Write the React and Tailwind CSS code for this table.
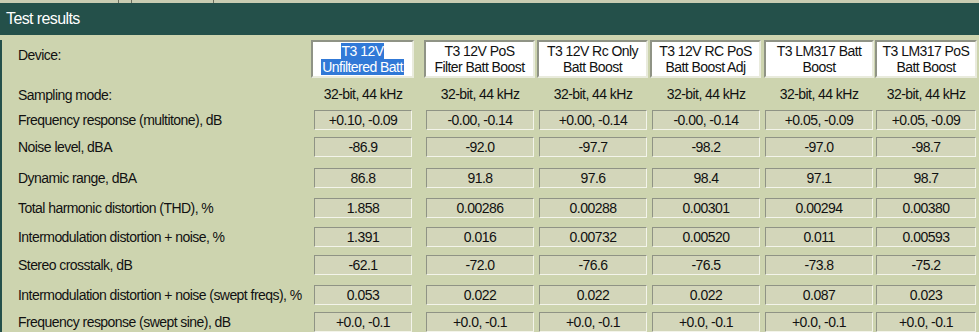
import React from 'react';

const devices = [
    ['T3 12V', 'Unfiltered Batt'],
    ['T3 12V PoS', 'Filter Batt Boost'],
    ['T3 12V Rc Only', 'Batt Boost'],
    ['T3 12V RC PoS', 'Batt Boost Adj'],
    ['T3 LM317 Batt', 'Boost'],
    ['T3 LM317 PoS', 'Batt Boost'],
];

const rows = [
    { label: 'Frequency response (multitone), dB', h: 'h-[27px]', values: ['+0.10, -0.09', '-0.00, -0.14', '+0.00, -0.14', '-0.00, -0.14', '+0.05, -0.09', '+0.05, -0.09'] },
    { label: 'Noise level, dBA', h: 'h-[31px]', values: ['-86.9', '-92.0', '-97.7', '-98.2', '-97.0', '-98.7'] },
    { label: 'Dynamic range, dBA', h: 'h-[30px]', values: ['86.8', '91.8', '97.6', '98.4', '97.1', '98.7'] },
    { label: 'Total harmonic distortion (THD), %', h: 'h-[29px]', values: ['1.858', '0.00286', '0.00288', '0.00301', '0.00294', '0.00380'] },
    { label: 'Intermodulation distortion + noise, %', h: 'h-[28px]', values: ['1.391', '0.016', '0.00732', '0.00520', '0.011', '0.00593'] },
    { label: 'Stereo crosstalk, dB', h: 'h-[30px]', values: ['-62.1', '-72.0', '-76.6', '-76.5', '-73.8', '-75.2'] },
    { label: 'Intermodulation distortion + noise (swept freqs), %', h: 'h-[27px]', values: ['0.053', '0.022', '0.022', '0.022', '0.087', '0.023'] },
    { label: 'Frequency response (swept sine), dB', h: 'h-[24px]', values: ['+0.0, -0.1', '+0.0, -0.1', '+0.0, -0.1', '+0.0, -0.1', '+0.0, -0.1', '+0.0, -0.1'] },
];

// per-column placement of the boxes inside each 113px cell
const deviceBox = ['w-[103px]', 'w-[111px]', 'w-[111px]', 'w-[111px]', 'ml-px w-[110px]', 'w-[102px]'];
const valueBox = ['ml-[3px] w-[98px]', 'ml-[2px] w-[108px]', 'ml-[2px] w-[108px]', 'ml-[2px] w-[108px]', 'ml-[2px] w-[108px]', 'ml-px w-[100px]'];

const grid = 'grid grid-cols-[309px_113px_113px_113px_113px_112px_106px]';

export default function App() {
    return (
        <div className="w-[979px] h-[332px] overflow-hidden bg-[#cdd4af] text-[#111] text-[14px] tracking-[-0.55px]" style={{ fontFamily: '"Liberation Sans", Arial, sans-serif' }}>
            {/* Top strip */}
            <div className="h-[3px] bg-[#c9ccb2] flex">
                <div className="w-[118px]" />
                <div className="w-px bg-[#6c6f60]" />
                <div className="w-[12px]" />
                <div className="w-px bg-[#6c6f60]" />
                <div className="w-[81px]" />
                <div className="w-px bg-[#6c6f60]" />
            </div>

            {/* Header */}
            <div className="h-[32px] bg-[#24504a] flex items-center pl-[6px] text-white text-[16px] tracking-[-0.6px]">
                Test results
            </div>

            <div className="border-l-2 border-[#24504a] h-[297px]">
                {/* Device row */}
                <div className={`${grid} mt-[5px] h-[38px]`}>
                    <div className="pl-[16px] pt-[5px]">Device:</div>
                    {devices.map((d, i) => (
                        <div key={i}>
                            <div className={`${deviceBox[i]} h-[38px] bg-white border-2 border-t-[#8f9385] border-l-[#8f9385] border-b-[#e9ebdd] border-r-[#e9ebdd] flex flex-col items-center justify-center leading-[16px]`}>
                                {i === 0 ? (
                                    <>
                                        <span className="bg-[#3179d7] text-white px-[1px]">{d[0]}</span>
                                        <span className="bg-[#3179d7] text-white px-[1px]">{d[1]}</span>
                                    </>
                                ) : (
                                    <>
                                        <span>{d[0]}</span>
                                        <span>{d[1]}</span>
                                    </>
                                )}
                            </div>
                        </div>
                    ))}
                </div>

                {/* Sampling mode */}
                <div className={`${grid} h-[32px] items-center`}>
                    <div className="pl-[16px] pt-[3px]">Sampling mode:</div>
                    {devices.map((d, i) => (
                        <div key={i} className={`${valueBox[i]} text-center`}>32-bit, 44 kHz</div>
                    ))}
                </div>

                {/* Result rows */}
                {rows.map((row) => (
                    <div key={row.label} className={`${grid} ${row.h}`}>
                        <div className="pl-[16px] h-[20px] flex items-center whitespace-nowrap">{row.label}</div>
                        {row.values.map((v, i) => (
                            <div key={i}>
                                <div className={`${valueBox[i]} h-[20px] bg-[#d3d6ba] border border-t-[#8f9385] border-l-[#8f9385] border-b-[#f3f4ea] border-r-[#f3f4ea] flex items-center justify-center`}>
                                    {v}
                                </div>
                            </div>
                        ))}
                    </div>
                ))}
            </div>
        </div>
    );
}
